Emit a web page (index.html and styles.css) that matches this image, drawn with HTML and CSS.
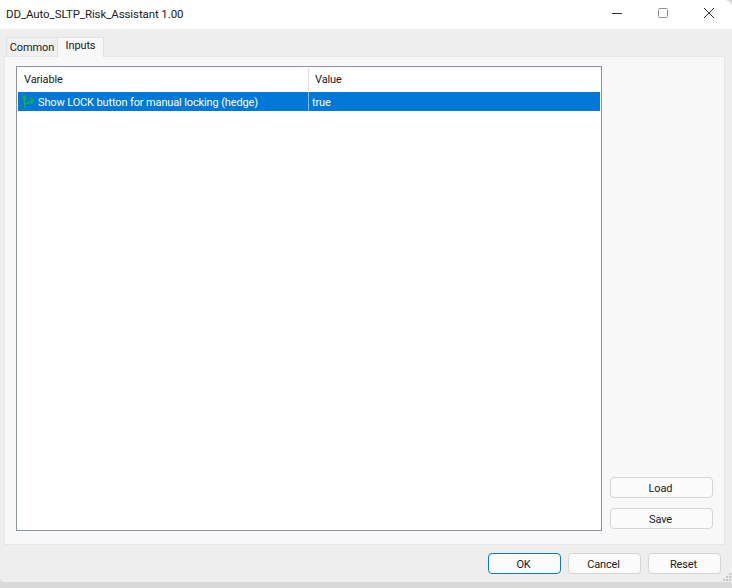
FILE: index.html
```html
<!DOCTYPE html>
<html lang="en">
<head>
<meta charset="utf-8">
<title>DD_Auto_SLTP_Risk_Assistant 1.00</title>
<link rel="stylesheet" href="styles.css">
</head>
<body>
<div class="window">
  <header class="titlebar">
    <div class="title">DD_Auto_SLTP_Risk_Assistant 1.00</div>
    <div class="controls">
      <svg class="ctl" width="46" height="29" viewBox="0 0 46 29"><path d="M18 13.5h10" stroke="#333" stroke-width="1" fill="none"/></svg>
      <svg class="ctl" width="46" height="29" viewBox="0 0 46 29"><rect x="18.5" y="8.5" width="9" height="9" rx="1" stroke="#8f8f8f" fill="none"/></svg>
      <svg class="ctl" width="46" height="29" viewBox="0 0 46 29"><path d="M18 8l10 10M28 8l-10 10" stroke="#333" stroke-width="1" fill="none"/></svg>
    </div>
  </header>
  <div class="tabs">
    <div class="tab">Common</div>
    <div class="tab active">Inputs</div>
  </div>
  <main class="pane">
    <div class="table">
      <div class="row head">
        <div class="cell var">Variable</div>
        <div class="cell val">Value</div>
      </div>
      <div class="row selected">
        <div class="cell var">
          <svg class="icon" width="15" height="15" viewBox="0 0 15 15"><path d="M3.5 2.5V14M1.5 4.5l2-2.5 2 2.5M3.5 10.5l8-4M9 3.5l3.5 3-2.5 3" stroke="#16b044" stroke-width="1.5" fill="none"/></svg>
          <span class="label">Show LOCK button for manual locking (hedge)</span>
        </div>
        <div class="cell val">true</div>
      </div>
    </div>
    <div class="side">
      <button class="btn side-btn">Load</button>
      <button class="btn side-btn">Save</button>
    </div>
  </main>
  <footer class="footer">
    <button class="btn foot-btn primary">OK</button>
    <button class="btn foot-btn">Cancel</button>
    <button class="btn foot-btn">Reset</button>
    <svg class="grip" width="10" height="10" viewBox="0 0 10 10"><path d="M7 1h2v2H7zM4 4h2v2H4zM7 4h2v2H7zM1 7h2v2H1zM4 7h2v2H4zM7 7h2v2H7z" fill="#c4c4c4"/></svg>
  </footer>
</div>
</body>
</html>
```
FILE: styles.css
```css
* { box-sizing: border-box; }
html, body { margin: 0; height: 100%; }
body {
  background: #d9d9d9;
  font-family: Roboto, "Open Sans", "Liberation Sans", sans-serif;
  font-size: 11px;
  letter-spacing: -0.13px;
  color: #1a1a1a;
  overflow: hidden;
}
.window {
  width: 732px;
  height: 582px;
  background: #eeeeee;
  display: flex;
  flex-direction: column;
  border-radius: 0 8px 0 4px;
  overflow: hidden;
}
.titlebar {
  height: 29px;
  flex: none;
  background: #fff;
  display: flex;
  align-items: center;
  justify-content: space-between;
}
.title { padding: 0 0 2px 6px; font-size: 11.5px; letter-spacing: -0.1px; }
.controls { display: flex; }
.ctl { display: block; }
.tabs {
  height: 27px;
  flex: none;
  display: flex;
  align-items: flex-end;
  padding-left: 6px;
  position: relative;
  z-index: 1;
}
.tab {
  height: 19px;
  width: 52px;
  background: #f0f0f0;
  border: 1px solid #e2e2e2;
  border-bottom: none;
  line-height: 20px;
  text-align: center;
}
.tab.active {
  height: 20px;
  width: 46px;
  margin-bottom: -1px;
  background: #f8f8f8;
  line-height: 15px;
  border-left: none;
}
.pane {
  flex: none;
  height: 489px;
  margin: 0 7px 0 4px;
  background: #f8f8f8;
  border: 1px solid #e6e6e6;
  padding: 9px 11px 13px 11px;
  display: flex;
  justify-content: space-between;
}
.table {
  width: 586px;
  background: #fff;
  border: 1px solid #8a92a3;
  padding: 1px;
}
.row { display: flex; }
.head { height: 24px; }
.head .cell { line-height: 24px; }
.head .var { border-right: 1px solid #e0e0e0; }
.selected { height: 19px; background: #0078d7; color: #fff; }
.selected .cell { line-height: 21px; }
.selected .var { border-right: 1px solid #7fbbeb; padding-left: 3px; }
.label { margin-top: 2px; }
.cell { padding-left: 6px; white-space: nowrap; }
.selected .val { padding-left: 3px; }
.cell.var { width: 291px; display: flex; align-items: center; }
.cell.val { flex: 1; }
.icon { margin-right: 2px; flex: none; }
.side {
  width: 103px;
  display: flex;
  flex-direction: column;
  justify-content: flex-end;
  gap: 10px;
  padding-bottom: 2px;
}
.btn {
  font: inherit;
  letter-spacing: inherit;
  color: #1a1a1a;
  background: #fbfbfb;
  border: 1px solid #d5d5d5;
  border-radius: 4px;
  padding: 1px 2px 0 0;
}
.side-btn { width: 103px; height: 21px; }
.footer {
  flex: 1;
  display: flex;
  justify-content: flex-end;
  align-items: center;
  gap: 7px;
  padding-right: 11px;
  position: relative;
}
.foot-btn { width: 73px; height: 21px; }
.foot-btn.primary { border-color: #0a7ad1; }
.grip { position: absolute; right: 0; bottom: 0; }
```
